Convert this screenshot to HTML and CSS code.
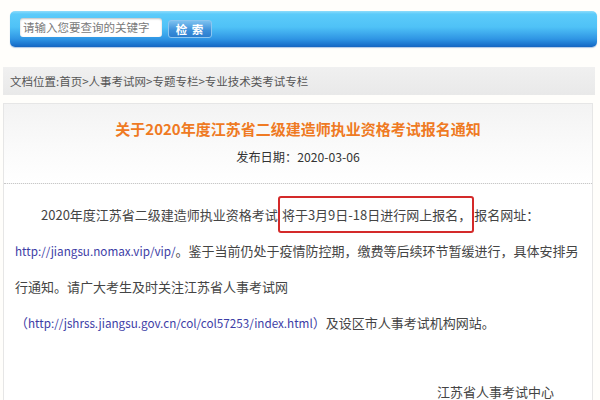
FILE: index.html
```html
<!DOCTYPE html>
<html lang="zh-CN">
<head>
<meta charset="utf-8">
<title>关于2020年度江苏省二级建造师执业资格考试报名通知</title>
<link rel="stylesheet" href="styles.css">
</head>
<body>
<div class="page">
  <div class="searchbar">
    <div class="search-input">请输入您要查询的关键字</div>
    <div class="search-btn">检 索</div>
  </div>
  <div class="crumbs">文档位置:首页&gt;人事考试网&gt;专题专栏&gt;专业技术类考试专栏</div>
  <div class="article">
    <div class="head">
      <h1 class="title">关于2020年度江苏省二级建造师执业资格考试报名通知</h1>
      <div class="date">发布日期：2020-03-06</div>
    </div>
    <div class="body">
      <p class="para">2020年度江苏省二级建造师执业资格考试<span class="mark">将于3月9日-18日进行网上报名，</span>报名网址：<br><a class="link">http://jiangsu.nomax.vip/vip/</a>。鉴于当前仍处于疫情防控期，缴费等后续环节暂缓进行，具体安排另<br>行通知。请广大考生及时关注江苏省人事考试网<br><span class="paren">（</span><a class="link">http://jshrss.jiangsu.gov.cn/col/col57253/index.html</a><span class="paren">）</span>及设区市人事考试机构网站。</p>
      <p class="sign">江苏省人事考试中心</p>
    </div>
  </div>
</div>
</body>
</html>
```
FILE: styles.css
```css
html, body {
  margin: 0;
  padding: 0;
  background: #fffefb;
  font-family: "Noto Sans CJK SC", sans-serif;
  color: #333;
}
.page {
  padding: 11px 5px 0 3px;
}
.searchbar {
  margin-left: 7px;
  margin-right: -2px;
  height: 36px;
  box-sizing: border-box;
  border-radius: 5px;
  background: linear-gradient(to bottom, #8fdcfb 0px, #5ccbfa 3px, #4fc2f7 16px, #2f95e4 28px, #1a72cc 34px, #1565c0 36px);
  display: flex;
  align-items: center;
  padding-left: 10px;
  box-shadow: 0 1px 1px rgba(30, 100, 190, 0.35);
}
.search-input {
  width: 142px;
  height: 19px;
  box-sizing: border-box;
  margin-top: -3px;
  background: #fff;
  border-radius: 3px;
  box-shadow: inset 0 1px 2px rgba(0, 0, 0, 0.25);
  font-size: 11.5px;
  line-height: 19px;
  color: #7a7a7a;
  padding-left: 3px;
  white-space: nowrap;
  overflow: hidden;
}
.search-btn {
  margin-left: 6px;
  margin-top: -1px;
  width: 44px;
  height: 18px;
  box-sizing: border-box;
  border: 1px solid #8cc6f0;
  border-radius: 3px;
  background: linear-gradient(to bottom, #7cc0ef, #3a8ed9 60%, #2b7dcf);
  color: #fff;
  font-size: 11.5px;
  font-weight: bold;
  line-height: 16px;
  text-align: center;
  letter-spacing: 1px;
}
.crumbs {
  margin-top: 20px;
  height: 28px;
  line-height: 28px;
  background: linear-gradient(to bottom, #f0f0f0, #e9e9e9);
  font-size: 11.5px;
  color: #555;
  padding-left: 7px;
  white-space: nowrap;
}
.article {
  margin-top: 8px;
  margin-right: 2px;
  border: 1px solid #e6e6e6;
  border-bottom: none;
  background: #fff;
}
.head {
  background: linear-gradient(to bottom, #f3f3f3, #fbfbfb 60%, #fff);
  border-bottom: 1px dotted #c8c8c8;
  padding-top: 14px;
  height: 65px;
}
.title {
  margin: 0;
  text-align: center;
  font-size: 15px;
  line-height: 22px;
  font-weight: bold;
  color: #ef7a23;
}
.date {
  margin-top: 8px;
  text-align: center;
  font-size: 12.2px;
  line-height: 18px;
  color: #333;
}
.body {
  padding: 13px 11px 0 11px;
}
.para {
  margin: 0;
  font-size: 13px;
  line-height: 36px;
  text-indent: 2em;
  color: #444;
  white-space: nowrap;
}
.link {
  color: #3d3da6;
  font-size: 11.7px;
}
.paren {
  color: #3d3da6;
}
.mark {
  border: 2px solid #d42a2a;
  border-radius: 3px;
  padding: 7px 1px 7px 2px;
}
.sign {
  margin: 41px 0 0 0;
  text-align: right;
  padding-right: 27px;
  font-size: 13px;
  line-height: 20px;
  color: #444;
}
```
